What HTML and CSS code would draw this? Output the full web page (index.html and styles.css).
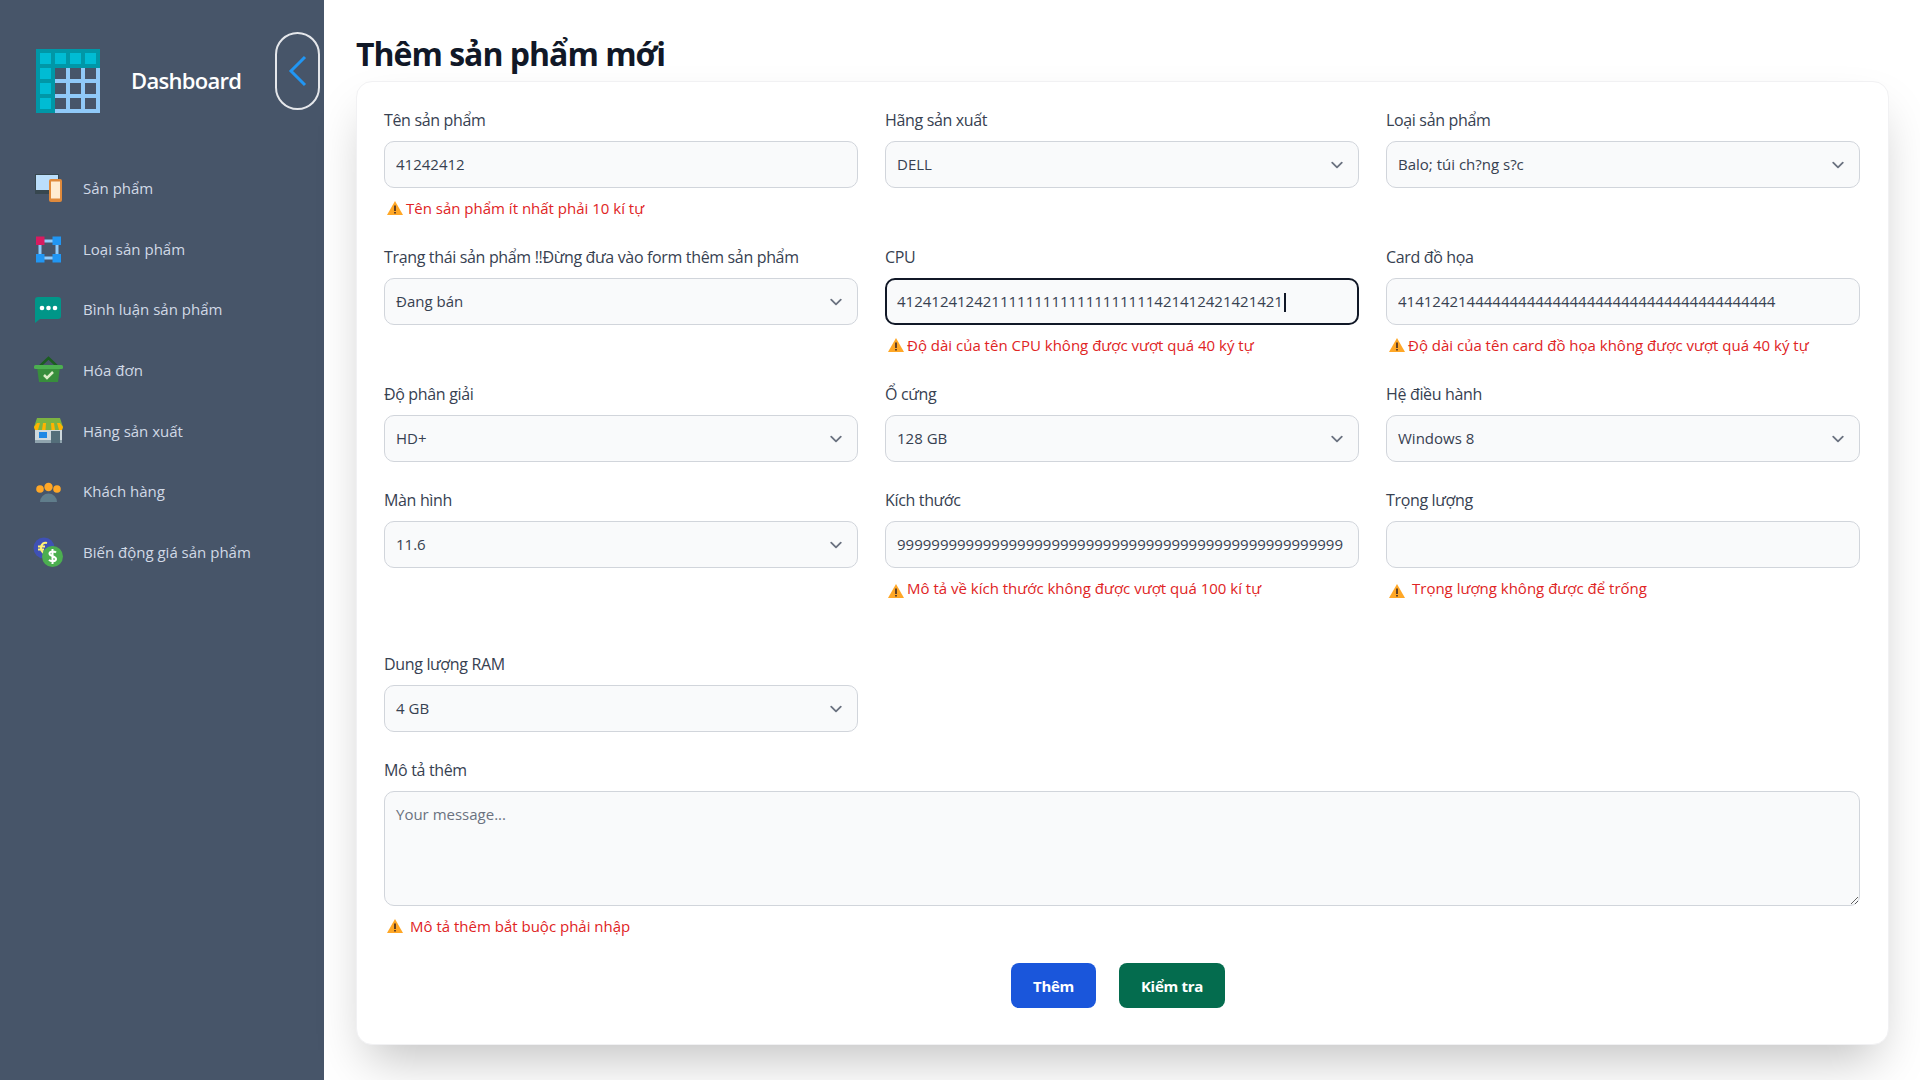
FILE: index.html
```html
<!DOCTYPE html>
<html lang="vi">

<head>
  <meta charset="UTF-8">
  <title>Thêm sản phẩm mới</title>
  <link rel="stylesheet" href="styles.css">
</head>

<body>
  <aside class="sidebar">
    <div class="brand">
      <svg class="brand-logo" viewBox="0 0 64 64">
        <path fill="#90caf9" d="M0 0h64v64H0z" />
        <path fill="#475569" d="M19 19h11v11H19zM34 19h11v11H34zM49 19h11v11H49zM19 34h11v11H19zM34 34h11v11H34zM49 34h11v11H49zM19 49h11v11H19zM34 49h11v11H34zM49 49h11v11H49z" />
        <path fill="#0097a7" d="M0 0h64v19H19v45H0z" />
        <path fill="#00bcd4" d="M4 4h11v11H4zM19 4h11v11H19zM34 4h11v11H34zM49 4h11v11H49zM4 19h11v11H4zM4 34h11v11H4zM4 49h11v11H4z" />
      </svg>
      <span class="brand-name">Dashboard</span>
      <button class="collapse-btn" type="button">
        <svg viewBox="0 0 20 32"><path d="M17 2 3 16l14 14" /></svg>
      </button>
    </div>
    <nav class="menu">
      <a class="menu-item" href="#">
        <svg class="menu-icon" viewBox="0 0 30 30">
          <path fill="#37474f" d="M2 1h24v20H2z" />
          <path fill="#bbdefb" d="M3 2h22v15H3z" />
          <rect x="16" y="6" width="13" height="23" rx="2" fill="#e08a3c" />
          <path fill="#ffecd2" d="M18 8.500h9v17h-9z" />
        </svg>
        <span>Sản phẩm</span>
      </a>
      <a class="menu-item" href="#">
        <svg class="menu-icon" viewBox="0 0 30 30">
          <path fill="none" stroke="#90caf9" stroke-width="3" d="M7 7h17v17H7z" />
          <path fill="#d81b60" d="M3 2.500h8.500V11H3z" />
          <path fill="#2196f3" d="M19.500 2.500H28V11h-8.500zM3 20h8.500v8.500H3zM19.500 20H28v8.500h-8.500z" />
        </svg>
        <span>Loại sản phẩm</span>
      </a>
      <a class="menu-item" href="#">
        <svg class="menu-icon" viewBox="0 0 30 30">
          <path fill="#009688" d="M5 3h20a3 3 0 0 1 3 3v16a3 3 0 0 1-3 3H7l-5 4V6a3 3 0 0 1 3-3z" />
          <circle cx="9" cy="14" r="2.300" fill="#fff" />
          <circle cx="15.500" cy="14" r="2.300" fill="#fff" />
          <circle cx="22" cy="14" r="2.300" fill="#fff" />
        </svg>
        <span>Bình luận sản phẩm</span>
      </a>
      <a class="menu-item" href="#">
        <svg class="menu-icon" viewBox="0 0 30 30">
          <path fill="none" stroke="#1b5e20" stroke-width="2.500" d="m7 11 8.500-8 8.500 8" />
          <path fill="#388e3c" d="M4 12h23l-2 15H6z" />
          <rect x="1" y="10" width="29" height="4" rx="1.500" fill="#4caf50" />
          <path fill="none" stroke="#dcedc8" stroke-width="2.500" d="m11 20 3 3 6-6" />
        </svg>
        <span>Hóa đơn</span>
      </a>
      <a class="menu-item" href="#">
        <svg class="menu-icon" viewBox="0 0 30 30">
          <path fill="#cfd8dc" d="M2 12h27v15H2z" />
          <path fill="#90a4ae" d="M2 24h27v3H2z" />
          <path fill="#1e88e5" d="M6 16h8v6H6z" />
          <path fill="#546e7a" d="M18 15h9v12h-9z" />
          <path fill="#7cb342" d="M4 2h23l3 9-1 3H2l-1-3z" />
          <path fill="#ffb300" d="M1 11l3-4h3l-2 7H2zM10 7h3l-.5 7H9zM18 7h3l1 7h-3.500zM24 7h3l3 4-1 3h-3z" />
        </svg>
        <span>Hãng sản xuất</span>
      </a>
      <a class="menu-item" href="#">
        <svg class="menu-icon" viewBox="0 0 30 30">
          <circle cx="7" cy="13" r="3.800" fill="#ffa726" />
          <circle cx="24" cy="13" r="3.800" fill="#ffa726" />
          <circle cx="15.500" cy="11" r="4.200" fill="#ffa726" />
          <path fill="#607d8b" d="M7 26a8.500 8.500 0 0 1 17 0z" />
        </svg>
        <span>Khách hàng</span>
      </a>
      <a class="menu-item" href="#">
        <svg class="menu-icon" viewBox="0 0 30 30">
          <circle cx="11" cy="11" r="10.500" fill="#3f51b5" />
          <path fill="none" stroke="#fff176" stroke-width="2" d="M14 6c-3-1-6 1-6 5s3 6 6 5M5 9.500h7M5 12.500h6" />
          <circle cx="19.500" cy="19.500" r="10.500" fill="#4caf50" />
          <path fill="none" stroke="#fff" stroke-width="2" d="M23 15.500c-1-1-6-2-6.500 1s6.500 2.500 6.500 5.500-5.500 2.500-7 .8M19.500 12v15" />
        </svg>
        <span>Biến động giá sản phẩm</span>
      </a>
    </nav>
  </aside>

  <main class="content">
    <h1 class="page-title">Thêm sản phẩm mới</h1>
    <form class="form-card">
      <div class="form-grid">
        <div class="field">
          <label class="field-label">Tên sản phẩm</label>
          <input class="control" type="text" value="41242412">
          <p class="error"><svg class="warn" viewBox="0 0 16 16"><use href="#warn" /></svg>Tên sản phẩm ít nhất phải 10 kí tự</p>
        </div>
        <div class="field">
          <label class="field-label">Hãng sản xuất</label>
          <div class="control select">DELL</div>
        </div>
        <div class="field">
          <label class="field-label">Loại sản phẩm</label>
          <div class="control select">Balo; túi ch?ng s?c</div>
        </div>

        <div class="field">
          <label class="field-label">Trạng thái sản phẩm !!Đừng đưa vào form thêm sản phẩm</label>
          <div class="control select">Đang bán</div>
        </div>
        <div class="field">
          <label class="field-label">CPU</label>
          <div class="control focused">412412412421111111111111111111421412421421421<span class="caret"></span></div>
          <p class="error"><svg class="warn" viewBox="0 0 16 16"><use href="#warn" /></svg>Độ dài của tên CPU không được vượt quá 40 ký tự</p>
        </div>
        <div class="field">
          <label class="field-label">Card đồ họa</label>
          <input class="control" type="text" value="41412421444444444444444444444444444444444444">
          <p class="error"><svg class="warn" viewBox="0 0 16 16"><use href="#warn" /></svg>Độ dài của tên card đồ họa không được vượt quá 40 ký tự</p>
        </div>

        <div class="field field-spaced">
          <label class="field-label">Độ phân giải</label>
          <div class="control select">HD+</div>
        </div>
        <div class="field field-spaced">
          <label class="field-label">Ổ cứng</label>
          <div class="control select">128 GB</div>
        </div>
        <div class="field field-spaced">
          <label class="field-label">Hệ điều hành</label>
          <div class="control select">Windows 8</div>
        </div>

        <div class="field">
          <label class="field-label">Màn hình</label>
          <div class="control select">11.6</div>
        </div>
        <div class="field">
          <label class="field-label">Kích thước</label>
          <input class="control" type="text" value="9999999999999999999999999999999999999999999999999999">
          <p class="error error-tall"><svg class="warn" viewBox="0 0 16 16"><use href="#warn" /></svg>Mô tả về kích thước không được vượt quá 100 kí tự</p>
        </div>
        <div class="field">
          <label class="field-label">Trọng lượng</label>
          <input class="control" type="text">
          <p class="error error-tall"><svg class="warn spaced" viewBox="0 0 16 16"><use href="#warn" /></svg>Trọng lượng không được để trống</p>
        </div>

        <div class="field">
          <label class="field-label">Dung lượng RAM</label>
          <div class="control select">4 GB</div>
        </div>

        <div class="field field-wide">
          <label class="field-label">Mô tả thêm</label>
          <textarea class="control textarea" placeholder="Your message..."></textarea>
          <p class="error"><svg class="warn spaced" viewBox="0 0 16 16"><use href="#warn" /></svg>Mô tả thêm bắt buộc phải nhập</p>
        </div>
      </div>

      <div class="actions">
        <button class="btn btn-blue" type="button">Thêm</button>
        <button class="btn btn-green" type="button">Kiểm tra</button>
      </div>
    </form>
  </main>

  <svg class="sprites" width="0" height="0">
    <symbol id="warn" viewBox="0 0 16 16">
      <path fill="#ffa726" d="M8 1 16 15H0z" />
      <path fill="#3e2723" d="M7.200 5.500h1.600v5.500H7.200zM7.200 12h1.600v1.600H7.200z" />
    </symbol>
  </svg>
</body>

</html>
```

FILE: styles.css
```css
/* Global Styles */
* {
  box-sizing: border-box;
}

body {
  margin: 0;
  height: 1080px;
  overflow: hidden;
  display: flex;
  background: #fff;
  color: #111827;
  font-family: 'Open Sans', 'Noto Sans', sans-serif;
}

.sprites {
  position: absolute;
}

/* Sidebar */
.sidebar {
  width: 324px;
  flex-shrink: 0;
  background: #475569;
  padding: 32px 4px 0 36px;
}

.brand {
  display: flex;
  align-items: flex-start;
  height: 141px;
}

.brand-logo {
  width: 64px;
  height: 64px;
  margin-top: 17px;
}

.brand-name {
  margin: 34px 0 0 31px;
  color: #fff;
  font-size: 22px;
  font-weight: 600;
  line-height: 28px;
  letter-spacing: -0.7px;
}

.collapse-btn {
  width: 45px;
  height: 78px;
  margin-left: auto;
  padding: 0;
  background: transparent;
  border: 2px solid #e5e7eb;
  border-radius: 23px;
  display: flex;
  align-items: center;
  justify-content: center;
}

.collapse-btn svg {
  width: 20px;
  height: 32px;
  fill: none;
  stroke: #2196f3;
  stroke-width: 3;
}

.menu {
  display: flex;
  flex-direction: column;
  gap: 30.7px;
}

.menu-item {
  display: flex;
  align-items: center;
  gap: 20px;
  height: 30px;
  color: #d1d9e6;
  font-size: 15px;
  text-decoration: none;
}

.menu-icon {
  width: 30px;
  height: 30px;
  flex-shrink: 0;
  margin-left: -3px;
}

/* Main area */
.content {
  flex: 1;
  padding: 34px 31px 0 32px;
}

.page-title {
  margin: 0 0 7px;
  font-size: 32px;
  line-height: 40px;
  font-weight: 700;
  letter-spacing: -1px;
  color: #111827;
}

.form-card {
  height: 964px;
  padding: 28px 28px 27px 27px;
  background: #fff;
  border: 1px solid #f1f1f3;
  border-radius: 16px;
  box-shadow: 0 25px 50px -12px rgba(0, 0, 0, 0.25);
}

.form-grid {
  display: grid;
  grid-template-columns: repeat(3, 1fr);
  gap: 27px;
}

.field {
  min-width: 0;
}

.field-spaced {
  margin-bottom: 1px;
}

.field-wide {
  grid-column: 1 / -1;
  padding-top: 1px;
}

.field-label {
  display: block;
  margin-bottom: 10px;
  height: 21px;
  color: #374151;
  font-size: 16px;
  font-weight: 500;
  line-height: 21px;
  letter-spacing: -0.34px;
}

.control {
  display: block;
  width: 100%;
  height: 47px;
  padding: 0 11px;
  background: #f9fafb;
  border: 1px solid #d1d5db;
  border-radius: 10px;
  color: #374151;
  font-family: inherit;
  font-size: 15px;
  line-height: 45px;
  white-space: nowrap;
  overflow: hidden;
}

input.control {
  padding-bottom: 2px;
}

.select {
  background-image: url("data:image/svg+xml,%3Csvg xmlns='http://www.w3.org/2000/svg' viewBox='0 0 20 20'%3E%3Cpath fill='none' stroke='%236b7280' stroke-width='1.5' stroke-linecap='round' stroke-linejoin='round' d='m6 8 4 4 4-4'/%3E%3C/svg%3E");
  background-repeat: no-repeat;
  background-position: right 9px center;
  background-size: 24px;
}

.focused {
  border: 2px solid #111827;
  padding: 0 10px;
  line-height: 43px;
}

.caret {
  display: inline-block;
  width: 2px;
  height: 19px;
  margin-left: 1px;
  vertical-align: middle;
  background: #111827;
}

.textarea {
  height: 115px;
  padding: 11px;
  line-height: 22px;
  resize: both;
}

.textarea::placeholder {
  color: #6b7280;
}

.error {
  display: flex;
  align-items: center;
  height: 32px;
  margin: 0;
  padding: 7px 0 0 3px;
  color: #e02424;
  font-size: 15px;
}

.error-tall {
  height: 59px;
  align-items: flex-start;
  padding-top: 10px;
}

.warn {
  width: 16px;
  height: 16px;
  margin-right: 3px;
  flex-shrink: 0;
}

.error-tall .warn {
  margin-top: 5px;
}

.warn.spaced {
  margin-right: 7px;
}

/* Buttons */
.actions {
  display: flex;
  justify-content: center;
  gap: 23px;
  margin-top: 25px;
  padding-right: 8px;
}

.btn {
  height: 45px;
  padding: 0 22px;
  border: none;
  border-radius: 8px;
  color: #fff;
  font-family: inherit;
  font-size: 15px;
  font-weight: 700;
  letter-spacing: -0.3px;
}

.btn-blue {
  background: #1a56db;
}

.btn-green {
  background: #046c4e;
}
```
